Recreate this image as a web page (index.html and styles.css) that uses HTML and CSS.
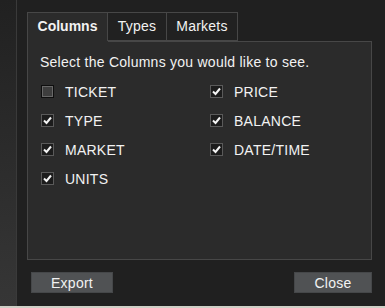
FILE: index.html
```html
<!DOCTYPE html>
<html lang="en">
<head>
    <meta charset="UTF-8">
    <title>Columns</title>
    <link rel="stylesheet" href="styles.css">
</head>
<body>
    <div class="side"></div>

    <div class="dialog">
        <!-- Tabs -->
        <div class="tabs">
            <div class="tab tab-columns active">Columns</div>
            <div class="tab tab-types">Types</div>
            <div class="tab tab-markets">Markets</div>
        </div>

        <!-- Columns panel -->
        <div class="panel">
            <p class="hint">Select the Columns you would like to see.</p>
            <div class="options">
                <label class="option"><span class="box"></span>TICKET</label>
                <label class="option"><span class="box checked"><svg viewBox="0 0 11 11"><polyline points="2,5.5 4.5,8 9,2.5"/></svg></span>PRICE</label>
                <label class="option"><span class="box checked"><svg viewBox="0 0 11 11"><polyline points="2,5.5 4.5,8 9,2.5"/></svg></span>TYPE</label>
                <label class="option"><span class="box checked"><svg viewBox="0 0 11 11"><polyline points="2,5.5 4.5,8 9,2.5"/></svg></span>BALANCE</label>
                <label class="option"><span class="box checked"><svg viewBox="0 0 11 11"><polyline points="2,5.5 4.5,8 9,2.5"/></svg></span>MARKET</label>
                <label class="option"><span class="box checked"><svg viewBox="0 0 11 11"><polyline points="2,5.5 4.5,8 9,2.5"/></svg></span>DATE/TIME</label>
                <label class="option"><span class="box checked"><svg viewBox="0 0 11 11"><polyline points="2,5.5 4.5,8 9,2.5"/></svg></span>UNITS</label>
            </div>
        </div>

        <!-- Footer buttons -->
        <div class="footer">
            <button class="btn btn-export">Export</button>
            <button class="btn btn-close">Close</button>
        </div>
    </div>
</body>
</html>
```

FILE: styles.css
```css
* {
    margin: 0;
    padding: 0;
    box-sizing: border-box;
}

body {
    width: 385px;
    height: 308px;
    display: flex;
    font-family: 'Liberation Sans', Arial, sans-serif;
    font-size: 14px;
    letter-spacing: 0.25px;
    color: #f2f2f2;
    background-color: #202020;
    overflow: hidden;
    border-bottom: 2px solid #cfcfc6;
}

.side {
    width: 17px;
    flex-shrink: 0;
    background: linear-gradient(to bottom, #212121, #363636);
    border-right: 1px solid #3a3a3a;
}

.dialog {
    flex: 1;
    display: flex;
    flex-direction: column;
    background-color: #202020;
    padding: 12px 13px 0 10px;
}

/* Tabs */
.tabs {
    display: flex;
    height: 29px;
}

.tab {
    height: 29px;
    line-height: 27px;
    text-align: center;
    border: 1px solid #474747;
    background-color: #212121;
    border-left: none;
}

.tab.active {
    border-left: 1px solid #474747;
    border-bottom: none;
    background-color: #2b2b2b;
    font-weight: bold;
    letter-spacing: 0;
}

.tab-columns { width: 81px; }
.tab-types { width: 59px; }
.tab-markets { width: 71px; }

/* Panel */
.panel {
    height: 219px;
    background-color: #2b2b2b;
    border: 1px solid #474747;
    border-top: none;
    padding: 13px 12px 0 13px;
    position: relative;
}

.panel::before {
    content: '';
    position: absolute;
    top: 0;
    left: 80px;
    right: -1px;
    border-top: 1px solid #474747;
}

.hint {
    line-height: 16px;
    margin-left: -1px;
}

.options {
    display: grid;
    grid-template-columns: 169px 1fr;
    grid-auto-rows: 29px;
    margin-top: 7px;
}

.option {
    display: flex;
    align-items: center;
    gap: 11px;
}

.box {
    width: 13px;
    height: 13px;
    flex-shrink: 0;
    border: 1px solid #0e0e0e;
    background-color: #3e3e3e;
    box-shadow: inset 0 0 0 1px #686868;
}

.box.checked {
    border: 1px solid #5a5a5a;
    background-color: #1c1c1c;
    box-shadow: none;
    display: flex;
    align-items: center;
    justify-content: center;
}

.box svg {
    width: 11px;
    height: 11px;
    fill: none;
    stroke: #f4f4f4;
    stroke-width: 2;
}

/* Footer */
.footer {
    display: flex;
    justify-content: space-between;
    padding: 12px 0 0 4px;
}

.btn {
    height: 21px;
    font-family: 'Liberation Sans', Arial, sans-serif;
    font-size: 14px;
    letter-spacing: 0.25px;
    color: #f2f2f2;
    background-color: #505254;
    border: 1px solid #454749;
}

.btn-export { width: 82px; }
.btn-close { width: 78px; }
```
